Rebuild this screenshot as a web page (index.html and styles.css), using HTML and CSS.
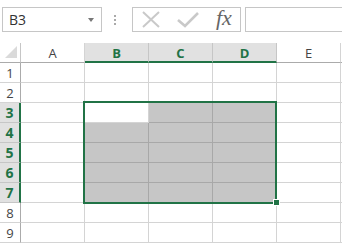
FILE: index.html
```html
<!DOCTYPE html>
<html>
    <head>
        <title>Hoja</title>
        <meta charset="UTF-8">
        <link rel="stylesheet" href="styles.css">
    </head>
    <body>
        <div class="barra">
            <div class="nombre">
                <span>B3</span>
                <span class="flecha"></span>
            </div>
            <div class="puntos"><i></i><i></i><i></i></div>
            <div class="botones">
                <svg class="icono" width="20" height="18" viewBox="0 0 20 18">
                    <path d="M2 1 L18 16 M18 1 L2 16" stroke="#c9c9c9" stroke-width="2" fill="none"/>
                </svg>
                <svg class="icono" width="22" height="16" viewBox="0 0 22 16">
                    <path d="M1 8 L8 14 L21 1" stroke="#c9c9c9" stroke-width="2.6" fill="none"/>
                </svg>
                <span class="fx">fx</span>
            </div>
            <div class="formula"></div>
        </div>

        <div class="hoja">
            <div class="celda esquina"><span class="triangulo"></span></div>
            <div class="celda cab">A</div>
            <div class="celda cab activa">B</div>
            <div class="celda cab activa">C</div>
            <div class="celda cab activa">D</div>
            <div class="celda cab">E</div>
            <div class="celda cab resto"></div>

            <div class="celda fila">1</div>
            <div class="celda"></div><div class="celda"></div><div class="celda"></div><div class="celda"></div><div class="celda"></div><div class="celda resto"></div>

            <div class="celda fila">2</div>
            <div class="celda"></div><div class="celda"></div><div class="celda"></div><div class="celda"></div><div class="celda"></div><div class="celda resto"></div>

            <div class="celda fila activa">3</div>
            <div class="celda"></div><div class="celda"></div><div class="celda sel"></div><div class="celda sel"></div><div class="celda"></div><div class="celda resto"></div>

            <div class="celda fila activa">4</div>
            <div class="celda"></div><div class="celda sel"></div><div class="celda sel"></div><div class="celda sel"></div><div class="celda"></div><div class="celda resto"></div>

            <div class="celda fila activa">5</div>
            <div class="celda"></div><div class="celda sel"></div><div class="celda sel"></div><div class="celda sel"></div><div class="celda"></div><div class="celda resto"></div>

            <div class="celda fila activa">6</div>
            <div class="celda"></div><div class="celda sel"></div><div class="celda sel"></div><div class="celda sel"></div><div class="celda"></div><div class="celda resto"></div>

            <div class="celda fila activa">7</div>
            <div class="celda"></div><div class="celda sel"></div><div class="celda sel"></div><div class="celda sel"></div><div class="celda"></div><div class="celda resto"></div>

            <div class="celda fila">8</div>
            <div class="celda"></div><div class="celda"></div><div class="celda"></div><div class="celda"></div><div class="celda"></div><div class="celda resto"></div>

            <div class="celda fila">9</div>
            <div class="celda"></div><div class="celda"></div><div class="celda"></div><div class="celda"></div><div class="celda"></div><div class="celda resto"></div>

            <!-- rango seleccionado B3:D7 -->
            <div class="seleccion"></div>
            <div class="tirador"></div>
        </div>
    </body>
</html>
```

FILE: styles.css
```css
body{
    margin: 0;
    background: #fff;
    font-family: "Open Sans", "Noto Sans", sans-serif;
    overflow: hidden;
}

/* barra de formulas */
.barra{
    display: flex;
    align-items: center;
    height: 25px;
    padding-top: 7px;
    padding-left: 2px;
}
.nombre{
    box-sizing: border-box;
    width: 100px;
    height: 25px;
    border: 1px solid #c6c6c6;
    display: flex;
    align-items: center;
    justify-content: space-between;
    padding: 0 7px 0 6px;
    font-size: 14px;
    color: #333;
}
.flecha{
    width: 0;
    height: 0;
    border-left: 3px solid transparent;
    border-right: 3px solid transparent;
    border-top: 4px solid #777;
}
.puntos{
    width: 28px;
    margin-left: -1px;
    display: flex;
    flex-direction: column;
    align-items: center;
    gap: 2px;
}
.puntos i{
    width: 2px;
    height: 2px;
    background: #aaa;
}
.botones{
    box-sizing: border-box;
    width: 109px;
    height: 25px;
    margin-left: 3px;
    border: 1px solid #c6c6c6;
    display: flex;
    align-items: center;
    padding-left: 8px;
    gap: 16px;
}
.icono{
    display: block;
}
.fx{
    font-family: "Liberation Serif", serif;
    font-style: italic;
    font-size: 22px;
    color: #666;
    margin-left: 1px;
    margin-top: -3px;
}
.formula{
    box-sizing: border-box;
    flex: 1;
    height: 25px;
    margin-left: 4px;
    border: 1px solid #c6c6c6;
    border-right: none;
}

/* hoja */
.hoja{
    position: relative;
    margin-top: 11px;
    display: grid;
    grid-template-columns: 21px repeat(5, 64px) 1fr;
    grid-auto-rows: 20px;
}
.celda{
    box-sizing: border-box;
    border-right: 1px solid #d4d4d4;
    border-bottom: 1px solid #d4d4d4;
    font-size: 13px;
    color: #444;
    display: flex;
    align-items: center;
    justify-content: center;
}
.resto{
    border-right: none;
}
.esquina{
    position: relative;
    border-right-color: #c6c6c6;
    border-bottom-color: #ababab;
}
.triangulo{
    position: absolute;
    right: 3px;
    bottom: 4px;
    width: 0;
    height: 0;
    border-left: 12px solid transparent;
    border-bottom: 12px solid #dadada;
}
.cab{
    border-bottom-color: #ababab;
    padding-top: 1px;
}
.fila{
    border-right-color: #ababab;
}
.cab.activa{
    background: #e1e1e1;
    color: #217346;
    font-weight: bold;
    border-right-color: #c6c6c6;
    border-bottom: 2px solid #217346;
}
.fila.activa{
    background: #e1e1e1;
    color: #217346;
    font-weight: bold;
    border-bottom-color: #c6c6c6;
    border-right: 2px solid #217346;
    font-size: 14px;
}
.sel{
    background: #c6c6c6;
    border-right-color: #a8a8a8;
    border-bottom-color: #a8a8a8;
}
.seleccion{
    position: absolute;
    left: 83px;
    top: 58px;
    width: 194px;
    height: 103px;
    box-sizing: border-box;
    border: 2px solid #217346;
}
.tirador{
    position: absolute;
    left: 273px;
    top: 156px;
    width: 5px;
    height: 5px;
    background: #217346;
    border: 1px solid #fff;
}
```
